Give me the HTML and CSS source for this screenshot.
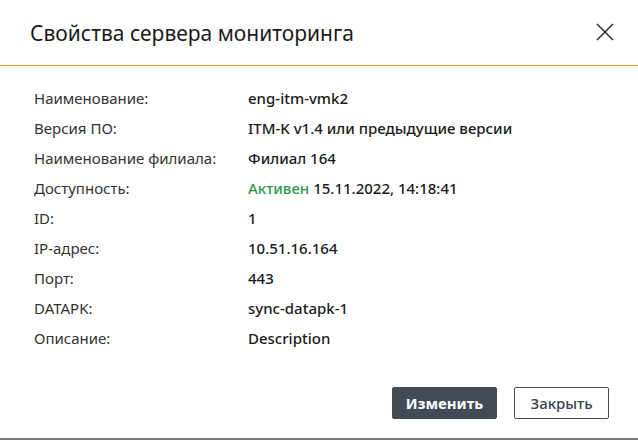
FILE: index.html
```html
<!DOCTYPE html>
<html lang="ru">
<head>
<meta charset="utf-8">
<link rel="stylesheet" href="styles.css">
</head>
<body>
<div class="dialog">
  <div class="header">
    <h1 class="title">Свойства сервера мониторинга</h1>
    <button class="close" aria-label="Закрыть">
      <svg width="18" height="18" viewBox="0 0 18 18"><path d="M1 1L17 17M17 1L1 17" stroke="#222" stroke-width="1.4" fill="none"/></svg>
    </button>
  </div>
  <div class="body">
    <div class="props">
      <div class="label">Наименование:</div><div class="value">eng-itm-vmk2</div>
      <div class="label">Версия ПО:</div><div class="value">ITM-K v1.4 или предыдущие версии</div>
      <div class="label">Наименование филиала:</div><div class="value">Филиал 164</div>
      <div class="label">Доступность:</div><div class="value"><span class="ok">Активен</span> 15.11.2022, 14:18:41</div>
      <div class="label">ID:</div><div class="value">1</div>
      <div class="label">IP-адрес:</div><div class="value">10.51.16.164</div>
      <div class="label">Порт:</div><div class="value">443</div>
      <div class="label">DATAPK:</div><div class="value">sync-datapk-1</div>
      <div class="label">Описание:</div><div class="value">Description</div>
    </div>
  </div>
  <div class="footer">
    <button class="btn btn-primary">Изменить</button>
    <button class="btn btn-secondary">Закрыть</button>
  </div>
</div>
</body>
</html>
```
FILE: styles.css
```css
* { box-sizing: border-box; }
html, body { margin: 0; padding: 0; background: #fff; }
body { font-family: "Noto Sans", "Open Sans", sans-serif; color: #222; }
.dialog {
  width: 638px;
  height: 440px;
  border-bottom: 2px solid #7a7a7a;
  display: flex;
  flex-direction: column;
}
.header {
  height: 66px;
  border-bottom: 1px solid #f39c12;
  display: flex;
  align-items: center;
  justify-content: space-between;
  padding: 0 24px 0 30px;
}
.title {
  margin: 0;
  font-size: 21px;
  font-weight: 400;
  color: #1a1a1a;
  padding-bottom: 0;
}
.close {
  border: 0;
  background: none;
  padding: 0;
  width: 18px;
  height: 18px;
  display: flex;
  margin-bottom: 2px;
}
.body {
  flex: 1;
  padding: 17px 34px 0;
}
.props {
  display: grid;
  grid-template-columns: 214px 1fr;
  grid-auto-rows: 30px;
  align-items: center;
  font-size: 15px;
}
.label { color: #333; }
.value { font-weight: 500; color: #1a1a1a; }
.ok { color: #2e9a4a; }
.footer {
  display: flex;
  justify-content: flex-end;
  gap: 17px;
  padding: 0 29px 19px;
}
.btn {
  height: 32px;
  font-family: inherit;
  font-size: 15px;
  font-weight: 600;
  border-radius: 2px;
  padding: 0;
}
.btn-primary {
  width: 105px;
  background: #434a56;
  border: 1px solid #434a56;
  color: #fff;
  font-weight: 700;
}
.btn-secondary {
  width: 95px;
  background: #fff;
  border: 1px solid #434a56;
  color: #3a4250;
  font-weight: 500;
}
```
